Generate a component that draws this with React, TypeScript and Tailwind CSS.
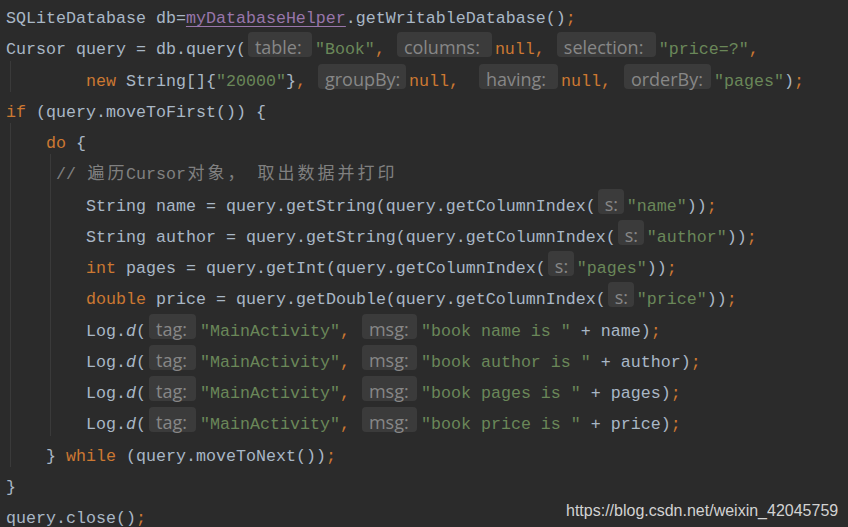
import React from "react";

type Tok =
  | { t: string; c?: string }
  | { hint: string; w: number; ml?: number; mr?: number }
  | { cjk: string };

const D = "text-[#a9b7c6]";
const K = "text-[#cc7832]";
const S = "text-[#6a8759]";
const C = "text-[#808080]";
const F = "text-[#9876aa] underline decoration-[#9876aa] underline-offset-[3px]";
const I = "text-[#a9b7c6] italic";

const hintMl: Record<string, string> = {
  "1": "ml-[1px]",
  "2": "ml-[2px]",
  "3": "ml-[3px]",
  "10": "ml-[10px]",
};
const hintMr: Record<string, string> = {
  "3": "mr-[3px]",
  "4": "mr-[4px]",
};

function Hint({ label, w, ml = 2, mr = 3 }: { label: string; w: number; ml?: number; mr?: number }) {
  return (
    <span
      className={`inline-block h-[25px] -mt-[4px] rounded-[4px] bg-[#3b3b3b] pl-[7px] pt-[5px] align-baseline text-[18px] leading-[20px] text-[#878787] ${hintMl[String(ml)]} ${hintMr[String(mr)]}`}
      style={{ width: w, fontFamily: '"Open Sans", "Liberation Sans", sans-serif' }}
    >
      {label}
    </span>
  );
}

function Cjk({ text }: { text: string }) {
  return (
    <>
      {Array.from(text).map((ch, i) => (
        <span
          key={i}
          className="inline-block w-[20px] text-center text-[17px] leading-[20px]"
          style={{ fontFamily: '"Noto Sans CJK SC", sans-serif' }}
        >
          {ch}
        </span>
      ))}
    </>
  );
}

type Line = { indent: number; guides: number[]; toks: Tok[] };

const logLine = (msg: string, v: string): Tok[] => [
  { t: "Log.", c: D },
  { t: "d", c: I },
  { t: "(", c: D },
  { hint: "tag:", w: 47, ml: 3, mr: 4 },
  { t: '"MainActivity"', c: S },
  { t: ", ", c: K },
  { hint: "msg:", w: 55, ml: 2, mr: 4 },
  { t: `"${msg}"`, c: S },
  { t: ` + ${v})`, c: D },
  { t: ";", c: K },
];

const lines: Line[] = [
  {
    indent: 0,
    guides: [],
    toks: [
      { t: "SQLiteDatabase db=", c: D },
      { t: "myDatabaseHelper", c: F },
      { t: ".getWritableDatabase()", c: D },
      { t: ";", c: K },
    ],
  },
  {
    indent: 0,
    guides: [],
    toks: [
      { t: "Cursor query = db.query(", c: D },
      { hint: "table:", w: 64 },
      { t: '"Book"', c: S },
      { t: ", ", c: K },
      { hint: "columns:", w: 95 },
      { t: "null, ", c: K },
      { hint: "selection:", w: 99 },
      { t: '"price=?"', c: S },
      { t: ",", c: K },
    ],
  },
  {
    indent: 8,
    guides: [0],
    toks: [
      { t: "new", c: K },
      { t: " String[]{", c: D },
      { t: '"20000"', c: S },
      { t: "}", c: D },
      { t: ", ", c: K },
      { hint: "groupBy:", w: 88 },
      { t: "null, ", c: K },
      { hint: "having:", w: 79, ml: 10 },
      { t: "null, ", c: K },
      { hint: "orderBy:", w: 87, ml: 3 },
      { t: '"pages"', c: S },
      { t: ")", c: D },
      { t: ";", c: K },
    ],
  },
  {
    indent: 0,
    guides: [],
    toks: [
      { t: "if", c: K },
      { t: " (query.moveToFirst()) {", c: D },
    ],
  },
  {
    indent: 4,
    guides: [0],
    toks: [
      { t: "do", c: K },
      { t: " {", c: D },
    ],
  },
  {
    indent: 5,
    guides: [0, 4],
    toks: [
      { t: "// ", c: C },
      { cjk: "遍历" },
      { t: "Cursor", c: C },
      { cjk: "对象，" },
      { t: " ", c: C },
      { cjk: "取出数据并打印" },
    ],
  },
  {
    indent: 8,
    guides: [0, 4],
    toks: [
      { t: "String name = query.getString(query.getColumnIndex(", c: D },
      { hint: "s:", w: 26 },
      { t: '"name"', c: S },
      { t: "))", c: D },
      { t: ";", c: K },
    ],
  },
  {
    indent: 8,
    guides: [0, 4],
    toks: [
      { t: "String author = query.getString(query.getColumnIndex(", c: D },
      { hint: "s:", w: 26 },
      { t: '"author"', c: S },
      { t: "))", c: D },
      { t: ";", c: K },
    ],
  },
  {
    indent: 8,
    guides: [0, 4],
    toks: [
      { t: "int", c: K },
      { t: " pages = query.getInt(query.getColumnIndex(", c: D },
      { hint: "s:", w: 26 },
      { t: '"pages"', c: S },
      { t: "))", c: D },
      { t: ";", c: K },
    ],
  },
  {
    indent: 8,
    guides: [0, 4],
    toks: [
      { t: "double", c: K },
      { t: " price = query.getDouble(query.getColumnIndex(", c: D },
      { hint: "s:", w: 26 },
      { t: '"price"', c: S },
      { t: "))", c: D },
      { t: ";", c: K },
    ],
  },
  { indent: 8, guides: [0, 4], toks: logLine("book name is ", "name") },
  { indent: 8, guides: [0, 4], toks: logLine("book author is ", "author") },
  { indent: 8, guides: [0, 4], toks: logLine("book pages is ", "pages") },
  { indent: 8, guides: [0, 4], toks: logLine("book price is ", "price") },
  {
    indent: 4,
    guides: [0],
    toks: [
      { t: "} ", c: D },
      { t: "while", c: K },
      { t: " (query.moveToNext())", c: D },
      { t: ";", c: K },
    ],
  },
  { indent: 0, guides: [], toks: [{ t: "}", c: D }] },
  {
    indent: 0,
    guides: [],
    toks: [
      { t: "query.close()", c: D },
      { t: ";", c: K },
    ],
  },
];

function CodeLine({ line }: { line: Line }) {
  return (
    <div className="flex h-[31.25px] pl-[6px]">
      {Array.from({ length: line.indent }).map((_, i) => (
        <div key={i} className="flex w-[10px] shrink-0">
          {line.guides.includes(i) && <div className="ml-[4px] w-px bg-[#3a3a3a]" />}
        </div>
      ))}
      <div className="whitespace-pre pt-[5px] leading-[31.25px]">
        {line.toks.map((tok, i) => {
          if ("hint" in tok) return <Hint key={i} label={tok.hint} w={tok.w} ml={tok.ml} mr={tok.mr} />;
          if ("cjk" in tok)
            return (
              <span key={i} className={C}>
                <Cjk text={tok.cjk} />
              </span>
            );
          return (
            <span key={i} className={tok.c}>
              {tok.t}
            </span>
          );
        })}
      </div>
    </div>
  );
}

export default function App() {
  return (
    <div
      className="relative h-[527px] w-[848px] overflow-hidden bg-[#2b2b2b] text-[16.667px] text-[#a9b7c6]"
      style={{ fontFamily: '"Liberation Mono", monospace' }}
    >
      <div className="-mt-[2px]">
        {lines.map((line, i) => (
          <CodeLine key={i} line={line} />
        ))}
      </div>
      <div
        className="absolute left-[566px] top-[499px] text-[16px] text-[#d2d2d2]"
        style={{ fontFamily: '"Liberation Sans", Arial, sans-serif' }}
      >
        https://blog.csdn.net/weixin_42045759
      </div>
    </div>
  );
}
